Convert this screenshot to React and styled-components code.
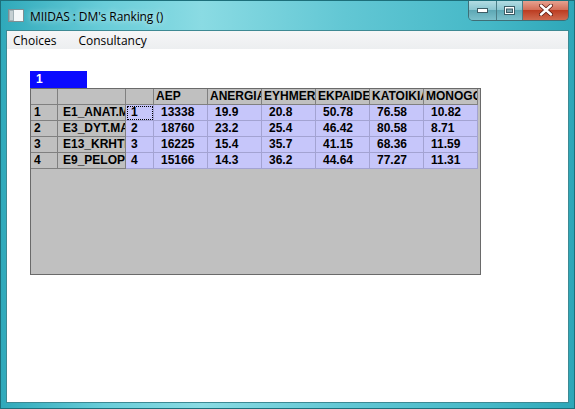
import React from "react";
import styled, { createGlobalStyle, css } from "styled-components";

const GlobalStyle = createGlobalStyle`
  html, body {
    margin: 0;
    padding: 0;
    background: #ffffff;
  }
  * { box-sizing: border-box; }
`;

const Window = styled.div`
  width: 575px;
  height: 409px;
  display: flex;
  flex-direction: column;
  background: linear-gradient(90deg, #2fa9ba 0%, #69cdd9 18%, #8adbe3 35%, #62c7d4 60%, #45b8c7 85%, #2ea7b8 100%);
  border: 1px solid #1d6f7a;
  overflow: hidden;
`;

const TitleBar = styled.div`
  height: 29px;
  display: flex;
  align-items: flex-start;
  padding-left: 7px;
`;

const TitleText = styled.span`
  margin-top: 7px;
  margin-left: 6px;
  font-family: "Open Sans", "Noto Sans", sans-serif;
  font-size: 12px;
  color: #000;
  letter-spacing: -0.1px;
  text-shadow: 0 0 6px rgba(255, 255, 255, 0.9);
  flex: 1;
`;

const AppIcon = styled.svg`
  margin-top: 8px;
  flex: none;
`;

const Controls = styled.div`
  display: flex;
  margin-right: 5px;
  margin-top: -1px;
  border: 1px solid #3e6e76;
  border-top: none;
  border-radius: 0 0 5px 5px;
  overflow: hidden;
`;

const CtlButton = styled.div`
  height: 20px;
  width: ${(p) => p.$w}px;
  display: flex;
  align-items: center;
  justify-content: center;
  border-left: ${(p) => (p.$first ? "none" : "1px solid #4a7d86")};
  background: linear-gradient(180deg, #b6dfe5 0%, #8cc7d1 48%, #5ea8b5 52%, #7cc0cb 100%);
  ${(p) =>
    p.$close &&
    css`
      background: linear-gradient(180deg, #e8a796 0%, #d4705a 48%, #bc3d22 52%, #cf6a4f 100%);
    `}
`;

const Client = styled.div`
  flex: 1;
  margin: 0 5px 5px 5px;
  border: 1px solid #3d8993;
  background: #ffffff;
  display: flex;
  flex-direction: column;
`;

const MenuBar = styled.div`
  height: 18px;
  background: linear-gradient(180deg, #f5f6f7, #eceef0);
  display: flex;
  align-items: center;
  padding-left: 6px;
  gap: 22px;
`;

const MenuItem = styled.span`
  font-family: "Open Sans", "Noto Sans", sans-serif;
  font-size: 12px;
  color: #000;
`;

const Content = styled.div`
  padding: 22px 0 0 23px;
  display: flex;
  flex-direction: column;
  align-items: flex-start;
`;

const TabLabel = styled.div`
  width: 57px;
  height: 17px;
  background: #0a0aff;
  color: #fff;
  font-family: "Liberation Sans", Arial, sans-serif;
  font-weight: bold;
  font-size: 12px;
  line-height: 17px;
  padding-left: 6px;
`;

const GridFrame = styled.div`
  width: 451px;
  height: 187px;
  background: #c0c0c0;
  border: 1px solid #6a6a6a;
  overflow: hidden;
`;

const Grid = styled.div`
  display: grid;
  grid-template-columns: 27px 68px 28px repeat(6, 54px);
  grid-auto-rows: 16px;
`;

const Cell = styled.div`
  font-family: "Liberation Sans", Arial, sans-serif;
  font-weight: bold;
  font-size: 12px;
  line-height: 15px;
  color: #000;
  white-space: nowrap;
  overflow: hidden;
  border-right: 1px solid #808080;
  border-bottom: 1px solid #808080;
  background: #c0c0c0;
  padding-left: ${(p) => p.$pad ?? 6}px;
  ${(p) =>
    p.$sel &&
    css`
      background: #c6c6fa;
      border-right-color: #a3a3d2;
      border-bottom-color: #a3a3d2;
    `}
  ${(p) =>
    p.$focus &&
    css`
      outline: 1px dotted #000;
      outline-offset: -2px;
    `}
`;

const headers = ["", "", "", "AEP", "ANERGIA", "EYHMERIA", "EKPAIDEYSH", "KATOIKIA", "MONOGONEIS"];

const rows = [
  ["1", "E1_ANAT.MAKEDONIA", "1", "13338", "19.9", "20.8", "50.78", "76.58", "10.82"],
  ["2", "E3_DYT.MAKEDONIA", "2", "18760", "23.2", "25.4", "46.42", "80.58", "8.71"],
  ["3", "E13_KRHTH", "3", "16225", "15.4", "35.7", "41.15", "68.36", "11.59"],
  ["4", "E9_PELOPONNHSOS", "4", "15166", "14.3", "36.2", "44.64", "77.27", "11.31"],
];

function WinIcon() {
  return (
    <AppIcon width="16" height="13" viewBox="0 0 16 13">
      <rect x="0.5" y="0.5" width="15" height="12" fill="#f4f8f9" stroke="#7d8f94" />
      <rect x="1" y="1" width="5" height="11" fill="#9fb0b5" />
      <rect x="2" y="2" width="3" height="9" fill="#c5d0d3" />
    </AppIcon>
  );
}

export default function App() {
  return (
    <>
      <GlobalStyle />
      <Window>
        <TitleBar>
          <WinIcon />
          <TitleText>MIIDAS : DM's Ranking ()</TitleText>
          <Controls>
            <CtlButton $w={27} $first>
              <svg width="11" height="5" viewBox="0 0 11 5">
                <rect x="0.5" y="0.5" width="10" height="4" fill="#fff" stroke="#3c5d66" />
              </svg>
            </CtlButton>
            <CtlButton $w={26}>
              <svg width="11" height="9" viewBox="0 0 11 9">
                <rect x="0.5" y="0.5" width="10" height="8" fill="#fff" stroke="#3c5d66" />
                <rect x="2.5" y="3" width="6" height="3.5" fill="#7aa6b0" stroke="#3c5d66" />
              </svg>
            </CtlButton>
            <CtlButton $w={46} $close>
              <svg width="14" height="12" viewBox="0 0 14 12">
                <path d="M2 1.5 L12 10.5 M12 1.5 L2 10.5" stroke="#5a1a10" strokeWidth="4" strokeLinecap="round" />
                <path d="M2 1.5 L12 10.5 M12 1.5 L2 10.5" stroke="#fff" strokeWidth="2.4" strokeLinecap="round" />
              </svg>
            </CtlButton>
          </Controls>
        </TitleBar>
        <Client>
          <MenuBar>
            <MenuItem>Choices</MenuItem>
            <MenuItem>Consultancy</MenuItem>
          </MenuBar>
          <Content>
            <TabLabel>1</TabLabel>
            <GridFrame>
              <Grid>
                {headers.map((h, i) => (
                  <Cell key={"h" + i} $pad={2}>
                    {h}
                  </Cell>
                ))}
                {rows.map((r, ri) =>
                  r.map((v, ci) => (
                    <Cell
                      key={ri + "-" + ci}
                      $pad={ci === 0 ? 3 : ci === 2 ? 5 : ci === 1 ? 5 : 7}
                      $sel={ci >= 2}
                      $focus={ri === 0 && ci === 2}
                    >
                      {v}
                    </Cell>
                  ))
                )}
              </Grid>
            </GridFrame>
          </Content>
        </Client>
      </Window>
    </>
  );
}
